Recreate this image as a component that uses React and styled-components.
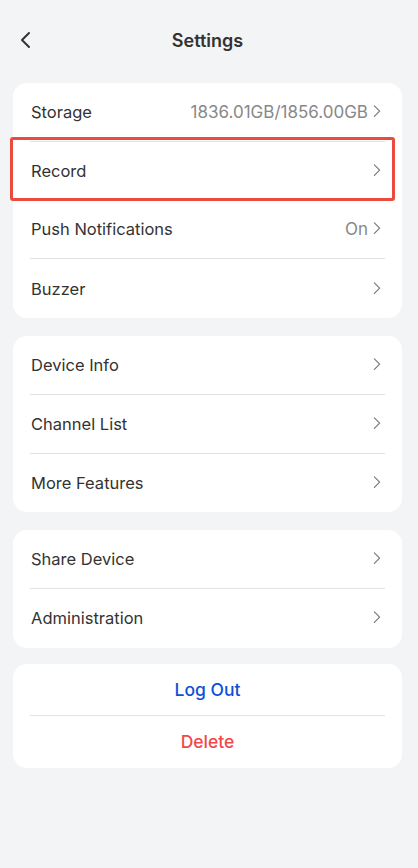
import styled, { createGlobalStyle } from "styled-components";

const GlobalStyle = createGlobalStyle`
  html, body {
    margin: 0;
    padding: 0;
    background: #f3f4f6;
    font-family: Inter, "Noto Sans", sans-serif;
  }
  * { box-sizing: border-box; }
`;

const groups = [
  [
    { label: "Storage", value: "1836.01GB/1856.00GB" },
    { label: "Record", highlight: true },
    { label: "Push Notifications", value: "On" },
    { label: "Buzzer" },
  ],
  [{ label: "Device Info" }, { label: "Channel List" }, { label: "More Features" }],
  [{ label: "Share Device" }, { label: "Administration" }],
];

function Chevron({ size = 14, color = "#7a7a7a", dir = "right" }) {
  const d = dir === "right" ? "M5 2l6 6-6 6" : "M11 2L4 9l7 7";
  return (
    <svg width={size} height={size + 4} viewBox="0 0 16 18" fill="none">
      <path d={d} stroke={color} strokeWidth={dir === "right" ? 1.4 : 2} strokeLinecap="round" strokeLinejoin="round" />
    </svg>
  );
}

export default function App() {
  return (
    <>
      <GlobalStyle />
      <Page>
        <Header>
          <BackButton>
            <Chevron size={16} color="#333" dir="left" />
          </BackButton>
          <Title>Settings</Title>
        </Header>

        {groups.map((rows, i) => (
          <Card key={i}>
            {rows.map((row) => (
              <Row key={row.label}>
                <Label>{row.label}</Label>
                <Right>
                  {row.value && <Value>{row.value}</Value>}
                  <Chevron />
                </Right>
                {row.highlight && <Highlight />}
              </Row>
            ))}
          </Card>
        ))}

        <ActionCard>
          <ActionRow color="#0b50d6">Log Out</ActionRow>
          <ActionRow color="#f2474a">Delete</ActionRow>
        </ActionCard>
      </Page>
    </>
  );
}

const Page = styled.div`
  width: 418px;
  min-height: 868px;
  padding: 0 16px 0 13px;
  display: flex;
  flex-direction: column;
  gap: 18px;
`;

const Header = styled.div`
  height: 65px;
  margin-top: 9px;
  display: flex;
  align-items: center;
  justify-content: center;
  position: relative;
  margin-bottom: -9px;
  padding-bottom: 2px;
`;

const BackButton = styled.div`
  position: absolute;
  left: 5px;
  top: 21px;
  display: flex;
`;

const Title = styled.h1`
  margin: 0;
  font-size: 18px;
  font-weight: 600;
  color: #333;
`;

const Card = styled.div`
  background: #fff;
  border-radius: 14px;
  padding: 0 17px;
  display: flex;
  flex-direction: column;
`;

const ActionCard = styled(Card)`
  margin-top: -2px;
`;

const Row = styled.div`
  position: relative;
  height: 58.75px;
  display: flex;
  align-items: center;
  justify-content: space-between;
  border-bottom: 1px solid #e2e2e4;
  padding-left: 1px;
  &:last-child {
    border-bottom: none;
  }
`;

const Label = styled.span`
  font-size: 16.5px;
  color: #333;
`;

const Right = styled.div`
  display: flex;
  align-items: center;
  gap: 2px;
  margin-right: 1px;
`;

const Value = styled.span`
  font-size: 17px;
  color: #888;
`;

const Highlight = styled.div`
  position: absolute;
  left: -20px;
  right: -10px;
  top: -5px;
  bottom: -1px;
  border: 3px solid #ea4b3f;
  border-radius: 3px;
  pointer-events: none;
`;

const ActionRow = styled.div`
  height: 52px;
  display: flex;
  align-items: center;
  justify-content: center;
  font-size: 17.5px;
  font-weight: 500;
  color: ${(p) => p.color};
  border-bottom: 1px solid #e2e2e4;
  &:last-child {
    border-bottom: none;
  }
`;
